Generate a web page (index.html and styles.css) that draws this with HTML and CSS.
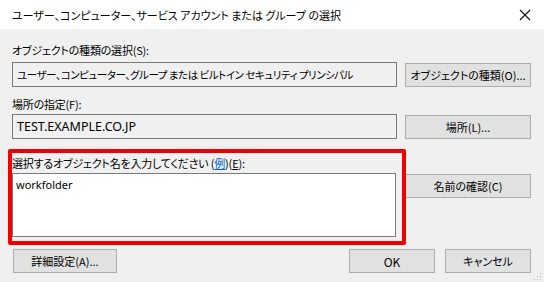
FILE: index.html
```html
<!DOCTYPE html>
<html lang="ja">
<head>
    <meta charset="UTF-8">
    <title>ユーザーの選択</title>
    <link rel="stylesheet" href="styles.css">
</head>
<body>
<div class="dialog">
    <div class="titlebar">
        <span class="title">ユーザー、コンピューター、サービス アカウント または グループ の選択</span>
        <svg class="close" width="12" height="12" viewBox="0 0 12 12">
            <path d="M1 1 L11 11 M11 1 L1 11" stroke="#111" stroke-width="1.1" fill="none"/>
        </svg>
    </div>
    <div class="content">
        <div class="label first">オブジェクトの種類の選択(S):</div>
        <div class="row">
            <div class="field">ユーザー、コンピューター、グループ または ビルトイン セキュリティ プリンシパル</div>
            <button class="btn side">オブジェクトの種類(O)...</button>
        </div>
        <div class="label second">場所の指定(F):</div>
        <div class="row">
            <div class="field latin">TEST.EXAMPLE.CO.JP</div>
            <button class="btn side">場所(L)...</button>
        </div>
        <div class="label third">選択するオブジェクト名を入力してください (<a href="#" class="link">例</a>)(<u>E</u>):</div>
        <div class="row top">
            <div class="names">workfolder</div>
            <button class="btn side check">名前の確認(C)</button>
        </div>
        <div class="footer">
            <button class="btn advanced">詳細設定(A)...</button>
            <button class="btn ok">OK</button>
            <button class="btn cancel">キャンセル</button>
        </div>
    </div>
    <div class="highlight"></div>
    <svg class="grip" width="8" height="8" viewBox="0 0 8 8">
        <rect x="6" y="0" width="1" height="1" fill="#b8b8b8"/>
        <rect x="3" y="3" width="1" height="1" fill="#b8b8b8"/>
        <rect x="6" y="3" width="1" height="1" fill="#b8b8b8"/>
        <rect x="0" y="6" width="1" height="1" fill="#b8b8b8"/>
        <rect x="3" y="6" width="1" height="1" fill="#b8b8b8"/>
        <rect x="6" y="6" width="1" height="1" fill="#b8b8b8"/>
    </svg>
</div>
</body>
</html>
```

FILE: styles.css
```css
body {
    margin: 0;
    font-family: "Noto Sans CJK JP", "Noto Sans", sans-serif;
    font-size: 11px;
    color: #000;
    background: #f0f0f0;
}

.dialog {
    position: relative;
    width: 544px;
    height: 282px;
    background: #f0f0f0;
    overflow: hidden;
}

.titlebar {
    height: 29px;
    background: #fff;
    display: flex;
    align-items: center;
    padding: 1px 10px 0 12px;
    box-sizing: border-box;
}

.title {
    flex: 1;
    font-feature-settings: "palt";
    white-space: nowrap;
}

.close {
    margin-right: 3px;
}

.content {
    padding: 0 13px 0 12px;
}

.label {
    height: 14px;
    line-height: 14px;
    font-size: 11px;
    letter-spacing: -0.2px;
    font-feature-settings: "palt";
    white-space: nowrap;
}

.label.first {
    margin-top: 14px;
    margin-bottom: 5px;
}

.label.second {
    margin-top: 10px;
    margin-bottom: 3px;
}

.label.third {
    margin-top: 17px;
    margin-bottom: 3px;
}

.link {
    color: #0066cc;
}

.row {
    display: flex;
    align-items: center;
}

.row.top {
    align-items: flex-start;
}

.field {
    width: 385px;
    height: 25px;
    box-sizing: border-box;
    border: 1px solid #7a7a7a;
    background: #f0f0f0;
    padding: 0 4px;
    line-height: 23px;
    font-size: 10.5px;
    letter-spacing: -0.45px;
    font-feature-settings: "palt";
    white-space: nowrap;
    overflow: hidden;
}

.field.latin {
    font-family: "Noto Sans", sans-serif;
    font-size: 12.5px;
    letter-spacing: 0;
}

.names {
    width: 384px;
    height: 64px;
    box-sizing: border-box;
    border: 1px solid #7a7a7a;
    background: #fff;
    padding: 2px 3px;
    font-family: "Noto Sans", sans-serif;
    font-size: 11px;
    line-height: 17px;
}

.btn {
    font-family: inherit;
    font-size: 11px;
    font-feature-settings: "palt";
    color: #000;
    background: #e1e1e1;
    border: 1px solid #adadad;
    height: 24px;
    padding: 0;
    white-space: nowrap;
}

.btn.side {
    width: 126px;
    margin-left: 8px;
}

.btn.check {
    margin-left: 9px;
    margin-top: 1px;
}

.footer {
    display: flex;
    margin-top: 12px;
}

.btn.advanced {
    width: 104px;
    margin-left: 1px;
}

.btn.ok {
    width: 86px;
    margin-left: auto;
    font-size: 12px;
}

.btn.cancel {
    width: 86px;
    margin-left: 10px;
}

.highlight {
    position: absolute;
    left: 8px;
    top: 149px;
    width: 390px;
    height: 88px;
    border: 4px solid #f00000;
    border-radius: 2px;
}

.grip {
    position: absolute;
    right: 2px;
    bottom: 1px;
}
```
